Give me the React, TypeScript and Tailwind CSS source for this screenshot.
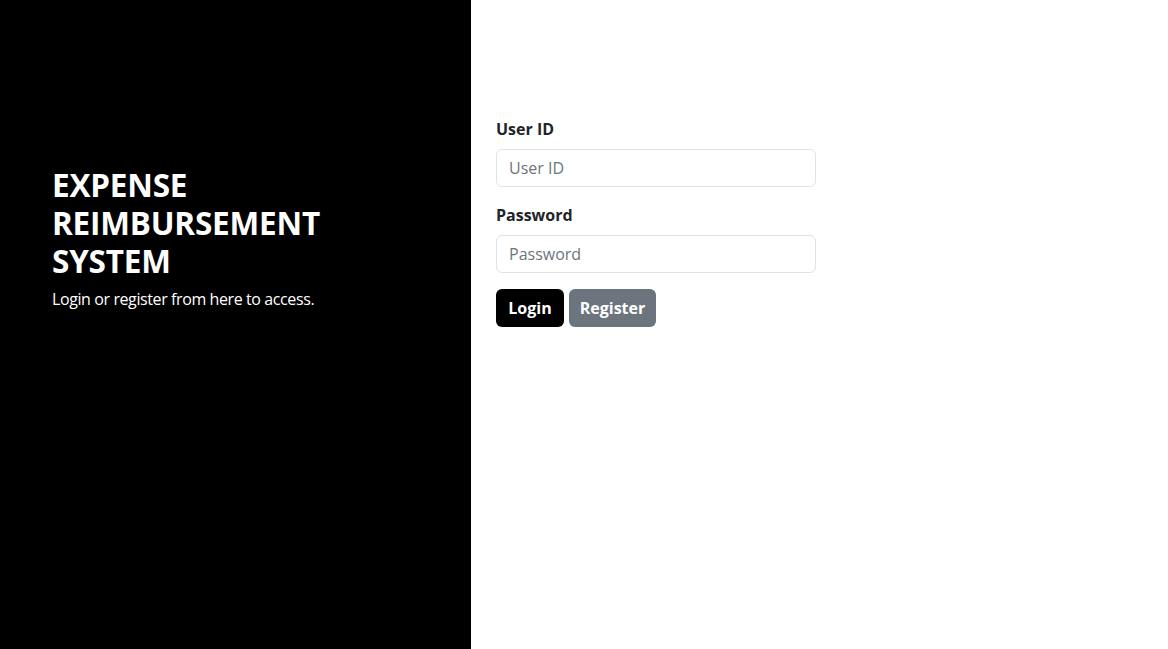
export default function App() {
  return (
    <div className="flex min-h-[649px] w-full bg-white font-['Open_Sans',sans-serif] text-[#212529]">
      <section className="w-[471px] shrink-0 bg-black px-[52px] pt-[166px] text-white">
        <h2 className="text-[31.5px] font-bold leading-[38px] tracking-[-0.2px] uppercase">
          Expense
          <br />
          Reimbursement
          <br />
          System
        </h2>
        <p className="mt-[7px] text-base leading-6 tracking-[-0.4px]">Login or register from here to access.</p>
      </section>

      <section className="flex-1 px-[25px] pt-[117px]">
        <form className="w-[320px]" onSubmit={(e) => e.preventDefault()}>
          <div className="mb-4">
            <label htmlFor="userId" className="mb-2 block text-base font-bold leading-6">
              User ID
            </label>
            <input
              id="userId"
              type="text"
              placeholder="User ID"
              className="block h-[38px] w-full rounded-md border border-[#dee2e6] px-3 text-base text-[#212529] placeholder:text-[#6c757d] focus:outline-none"
            />
          </div>
          <div className="mb-4">
            <label htmlFor="password" className="mb-2 block text-base font-bold leading-6">
              Password
            </label>
            <input
              id="password"
              type="password"
              placeholder="Password"
              className="block h-[38px] w-full rounded-md border border-[#dee2e6] px-3 text-base text-[#212529] placeholder:text-[#6c757d] focus:outline-none"
            />
          </div>
          <div className="flex gap-[5px]">
            <button type="submit" className="h-[38px] w-[68px] rounded-md bg-black text-base font-bold text-white">
              Login
            </button>
            <button type="button" className="h-[38px] w-[87px] rounded-md bg-[#6c757d] text-base font-bold text-white">
              Register
            </button>
          </div>
        </form>
      </section>
    </div>
  );
}
